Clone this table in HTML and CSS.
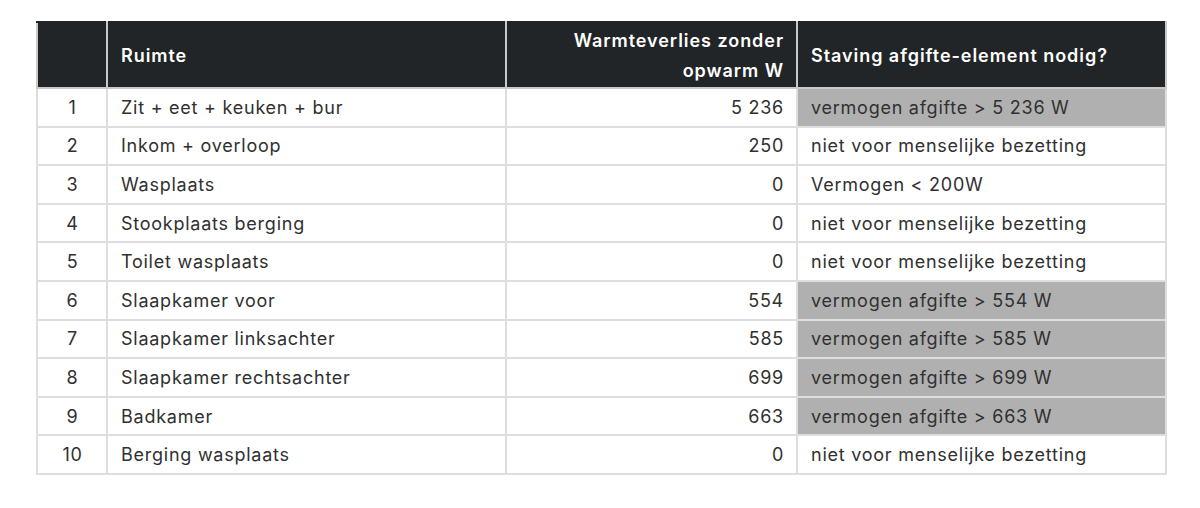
FILE: index.html
```html
<!DOCTYPE html>
<html lang="nl">
<head>
<meta charset="utf-8">
<link rel="stylesheet" href="styles.css">
</head>
<body>
<div class="wrap">
<table class="tbl">
  <colgroup>
    <col class="c1"><col class="c2"><col class="c3"><col class="c4">
  </colgroup>
  <thead>
    <tr>
      <th></th>
      <th class="left">Ruimte</th>
      <th class="right">Warmteverlies zonder<br>opwarm W</th>
      <th class="left">Staving afgifte-element nodig?</th>
    </tr>
  </thead>
  <tbody>
    <tr><td class="num">1</td><td>Zit + eet + keuken + bur</td><td class="right">5 236</td><td class="hl">vermogen afgifte &gt; 5 236 W</td></tr>
    <tr><td class="num">2</td><td>Inkom + overloop</td><td class="right">250</td><td>niet voor menselijke bezetting</td></tr>
    <tr><td class="num">3</td><td>Wasplaats</td><td class="right">0</td><td>Vermogen &lt; 200W</td></tr>
    <tr><td class="num">4</td><td>Stookplaats berging</td><td class="right">0</td><td>niet voor menselijke bezetting</td></tr>
    <tr><td class="num">5</td><td>Toilet wasplaats</td><td class="right">0</td><td>niet voor menselijke bezetting</td></tr>
    <tr><td class="num">6</td><td>Slaapkamer voor</td><td class="right">554</td><td class="hl">vermogen afgifte &gt; 554 W</td></tr>
    <tr><td class="num">7</td><td>Slaapkamer linksachter</td><td class="right">585</td><td class="hl">vermogen afgifte &gt; 585 W</td></tr>
    <tr><td class="num">8</td><td>Slaapkamer rechtsachter</td><td class="right">699</td><td class="hl">vermogen afgifte &gt; 699 W</td></tr>
    <tr><td class="num">9</td><td>Badkamer</td><td class="right">663</td><td class="hl">vermogen afgifte &gt; 663 W</td></tr>
    <tr><td class="num">10</td><td>Berging wasplaats</td><td class="right">0</td><td>niet voor menselijke bezetting</td></tr>
  </tbody>
</table>
</div>
</body>
</html>
```

FILE: styles.css
```css
html, body {
  margin: 0;
  padding: 0;
  background: #ffffff;
}
body {
  font-family: "Inter", "Noto Sans", sans-serif;
  color: #303030;
}
.wrap {
  padding: 21px 0 0 36px;
}
.tbl {
  border-collapse: collapse;
  width: 1129px;
  table-layout: fixed;
  font-size: 18px;
  letter-spacing: 0.75px;
}
.c1 { width: 70px; }
.c2 { width: 399px; }
.c3 { width: 291px; }
.c4 { width: 369px; }
.tbl th, .tbl td {
  border: 2px solid #dedede;
  padding: 0 12px 0 13px;
  vertical-align: middle;
}
.tbl th {
  background: #222527;
  color: #ffffff;
  font-weight: 600;
  letter-spacing: 0.95px;
  height: 62px;
  line-height: 30px;
  padding-top: 2px;
  border-color: #c9c9c9;
  border-top-color: #222527;
}
.tbl td {
  height: 35.6px;
  line-height: 24px;
  font-weight: 400;
  padding-top: 1px;
}
.left { text-align: left; }
.right { text-align: right; }
.num { text-align: center; }
.tbl td.hl {
  background: #b0b0b0;
}
```
